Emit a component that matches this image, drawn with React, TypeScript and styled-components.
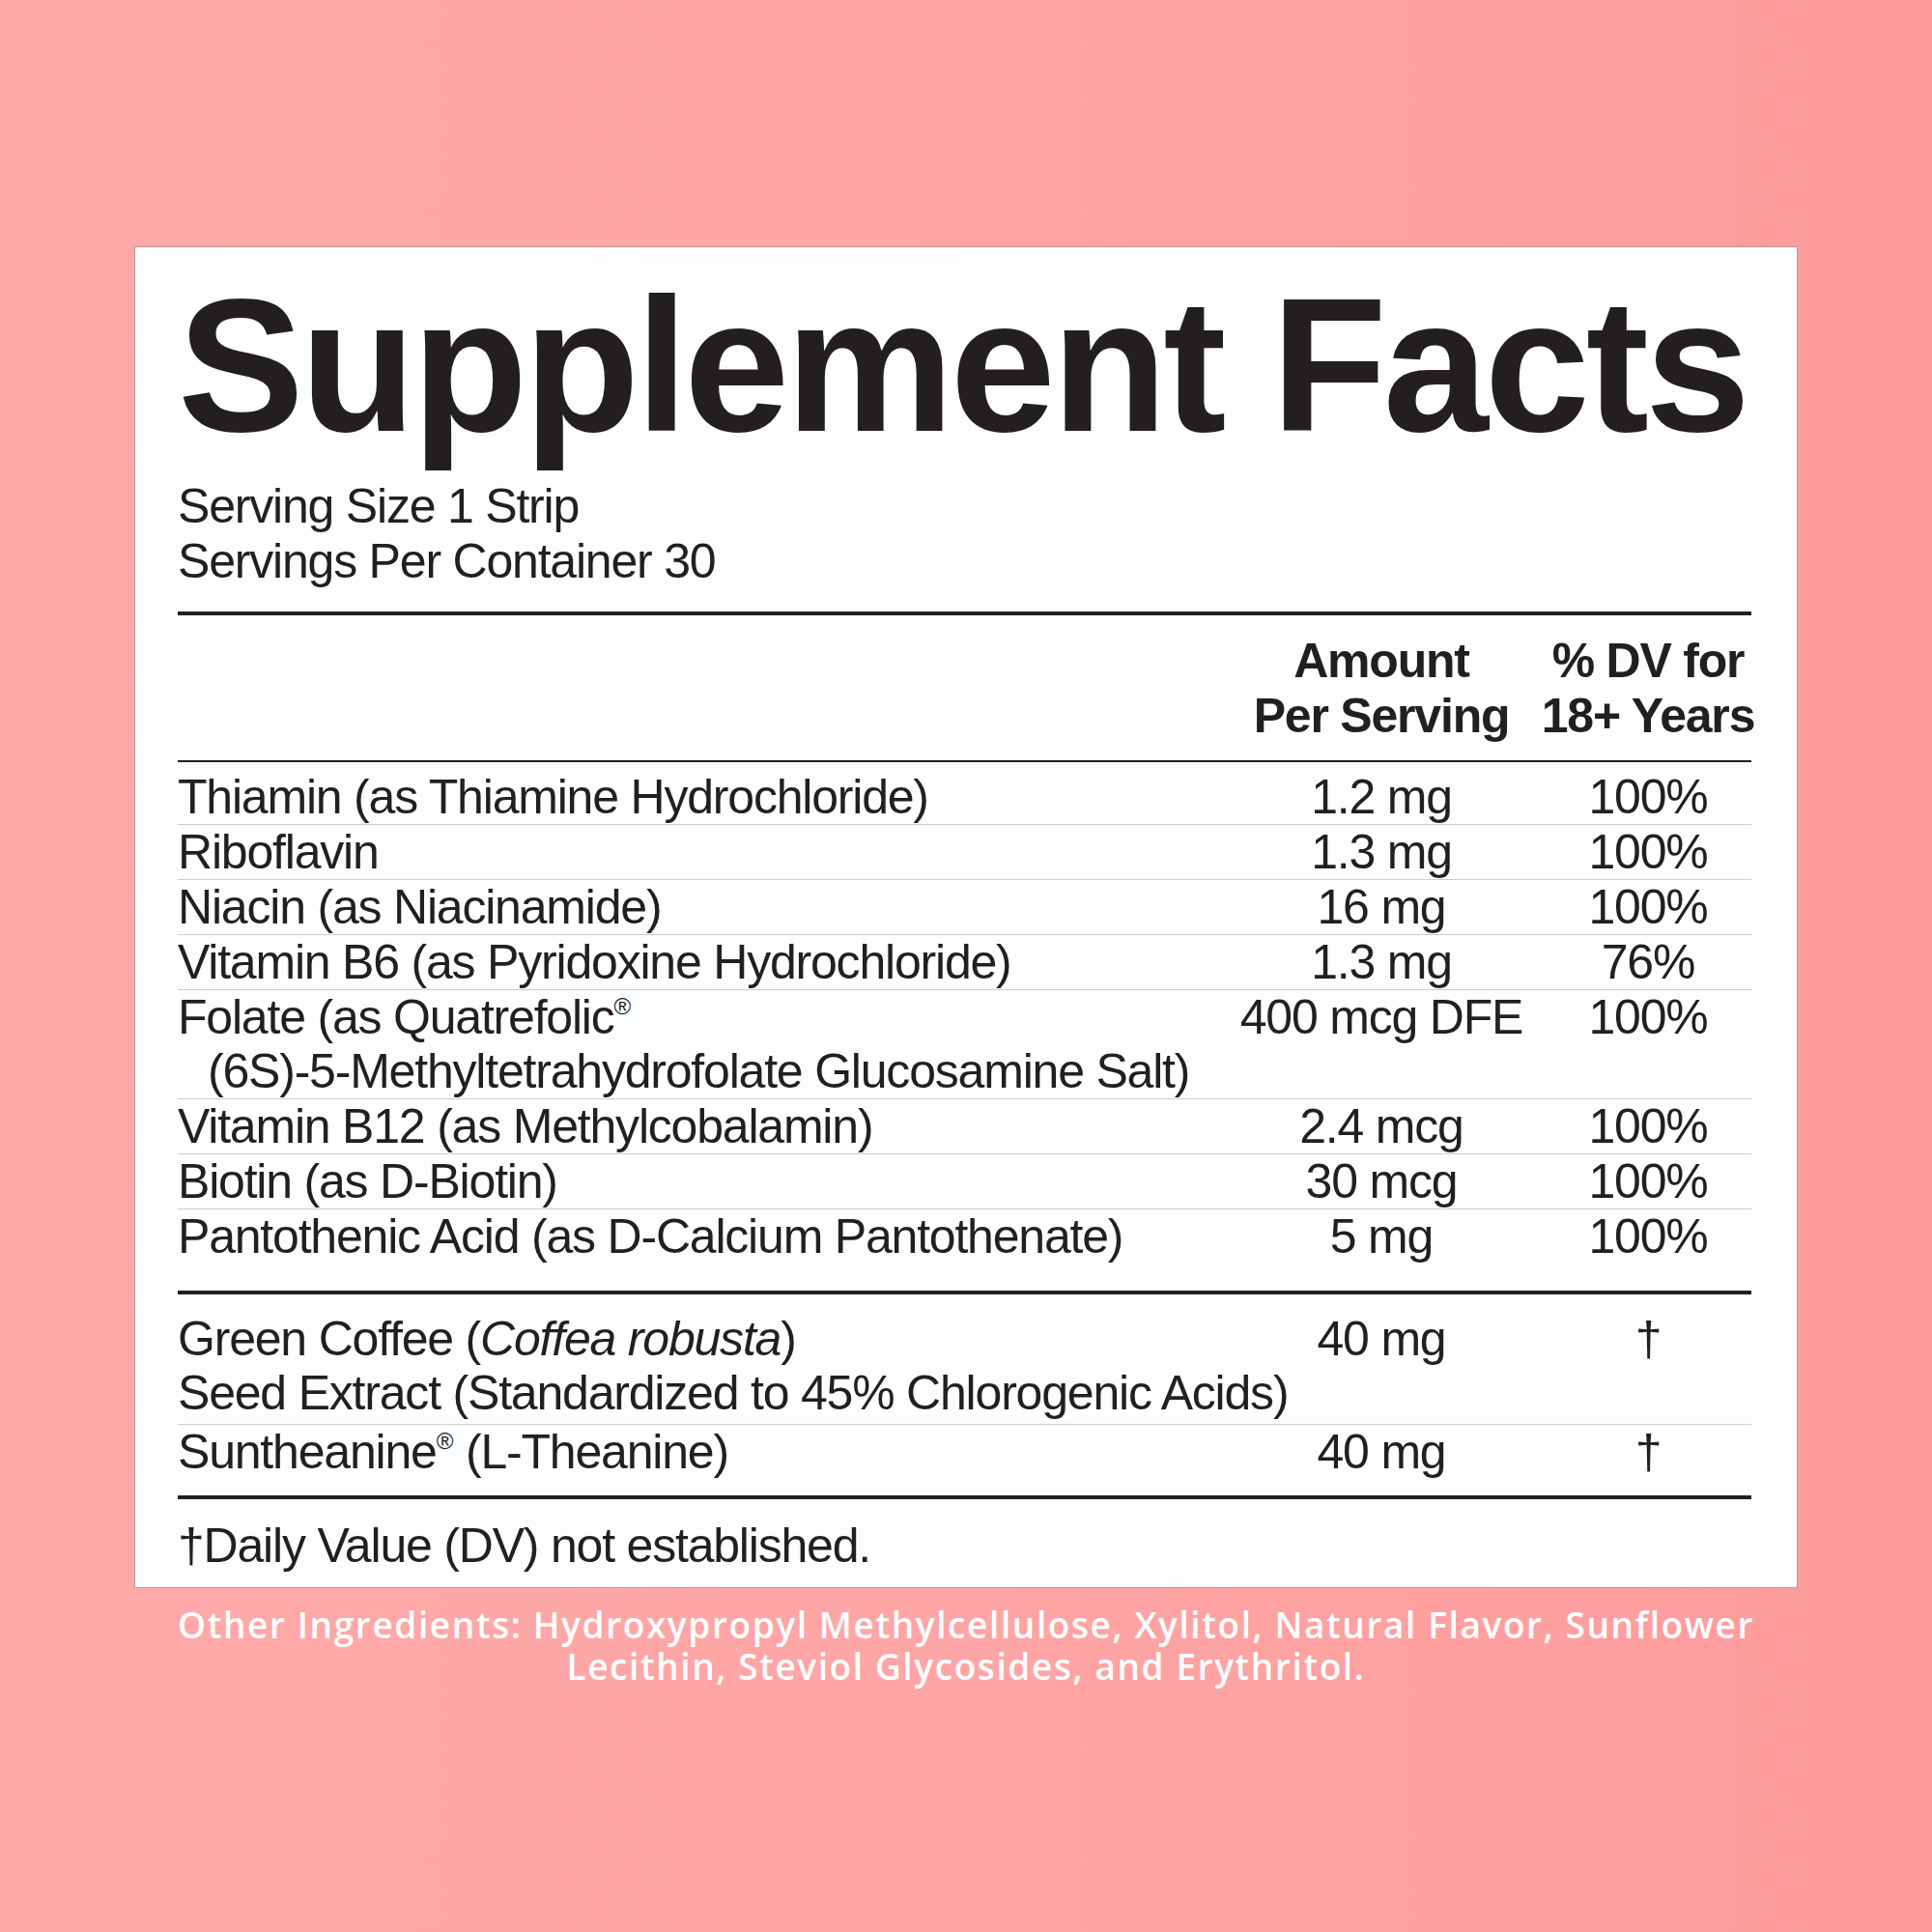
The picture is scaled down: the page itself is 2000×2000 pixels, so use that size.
import styled, { createGlobalStyle } from "styled-components";

const INK = "#231f20";
const COLS = "minmax(0, 1fr) 338px 214px";

const GlobalStyle = createGlobalStyle`
  html, body {
    margin: 0;
    padding: 0;
  }
  body {
    background: linear-gradient(90deg, #fea9a9 0%, #fea5a5 50%, #fe9b9b 100%);
    font-family: "Liberation Sans", Arial, Helvetica, sans-serif;
    color: ${INK};
  }
`;

const Page = styled.div`
  min-height: 2000px;
  width: 2000px;
  display: flex;
  flex-direction: column;
  align-items: center;
  padding-top: 255px;
  box-sizing: border-box;
`;

const Label = styled.section`
  width: 1722px;
  box-sizing: border-box;
  background: #fcfdff;
  border: 1px solid #b49a9a;
  padding: 25px 47px 15px 44px;
  font-size: 50px;
  letter-spacing: -1.2px;
`;

const Title = styled.h1`
  margin: 0;
  font-size: 196px;
  line-height: 196px;
  font-weight: 700;
  letter-spacing: -4px;
`;

const ServingInfo = styled.div`
  margin-top: 19px;
  line-height: 57px;
`;

const Rule = styled.div<{ $h: number }>`
  height: ${({ $h }) => $h}px;
  background: ${INK};
`;

const HeaderRow = styled.div`
  display: grid;
  grid-template-columns: ${COLS};
  padding: 19px 0 17px;
  line-height: 57px;
  font-weight: 700;
`;

const HeaderCell = styled.div`
  justify-self: center;
  text-align: center;
  white-space: nowrap;
`;

const Block = styled.div<{ $top: number; $bottom: number }>`
  padding: ${({ $top, $bottom }) => `${$top}px 0 ${$bottom}px`};
`;

const Row = styled.div<{ $last?: boolean; $extra?: number }>`
  display: grid;
  grid-template-columns: ${COLS};
  line-height: 56px;
  padding-bottom: ${({ $extra }) => $extra ?? 0}px;
  border-bottom: ${({ $last }) => ($last ? "none" : "1px solid #cdcdcd")};
`;

const Name = styled.div`
  white-space: nowrap;
`;

const SubLine = styled.div<{ $indent?: boolean }>`
  padding-left: ${({ $indent }) => ($indent ? "31px" : "0")};
`;

const Value = styled.div`
  justify-self: center;
  white-space: nowrap;
`;

const Reg = styled.sup`
  font-size: 24px;
  line-height: 0;
  vertical-align: 20px;
  letter-spacing: 0;
`;

const Footnote = styled.div`
  padding-top: 20px;
  line-height: 56px;
`;

const OtherIngredients = styled.p`
  margin: 16px 0 0;
  width: 1722px;
  text-align: center;
  color: #ffffff;
  font-family: "Open Sans", "Liberation Sans", sans-serif;
  font-weight: 600;
  font-size: 37px;
  line-height: 43px;
  letter-spacing: 1.6px;
`;

type Nutrient = {
  name: React.ReactNode;
  sub?: React.ReactNode;
  indent?: boolean;
  extra?: number;
  amount: string;
  dv: string;
};

const vitamins: Nutrient[] = [
  { name: "Thiamin (as Thiamine Hydrochloride)", amount: "1.2 mg", dv: "100%" },
  { name: "Riboflavin", amount: "1.3 mg", dv: "100%" },
  { name: "Niacin (as Niacinamide)", amount: "16 mg", dv: "100%" },
  { name: "Vitamin B6 (as Pyridoxine Hydrochloride)", amount: "1.3 mg", dv: "76%" },
  {
    name: (
      <>
        Folate (as Quatrefolic<Reg>®</Reg>
      </>
    ),
    sub: "(6S)-5-Methyltetrahydrofolate Glucosamine Salt)",
    indent: true,
    amount: "400 mcg DFE",
    dv: "100%",
  },
  { name: "Vitamin B12 (as Methylcobalamin)", amount: "2.4 mcg", dv: "100%" },
  { name: "Biotin (as D-Biotin)", amount: "30 mcg", dv: "100%" },
  { name: "Pantothenic Acid (as D-Calcium Pantothenate)", amount: "5 mg", dv: "100%" },
];

const botanicals: Nutrient[] = [
  {
    name: (
      <>
        Green Coffee (<i>Coffea robusta</i>)
      </>
    ),
    sub: "Seed Extract (Standardized to 45% Chlorogenic Acids)",
    extra: 4,
    amount: "40 mg",
    dv: "†",
  },
  {
    name: (
      <>
        Suntheanine<Reg>®</Reg> (L-Theanine)
      </>
    ),
    amount: "40 mg",
    dv: "†",
  },
];

const NutrientRows = ({ items }: { items: Nutrient[] }) => (
  <>
    {items.map((item, i) => (
      <Row key={i} $last={i === items.length - 1} $extra={item.extra}>
        <Name>
          <SubLine>{item.name}</SubLine>
          {item.sub && <SubLine $indent={item.indent}>{item.sub}</SubLine>}
        </Name>
        <Value>{item.amount}</Value>
        <Value>{item.dv}</Value>
      </Row>
    ))}
  </>
);

const App = () => {
  return (
    <>
      <GlobalStyle />
      <Page>
        <Label>
          <Title>Supplement Facts</Title>
          <ServingInfo>
            Serving Size 1 Strip
            <br />
            Servings Per Container 30
          </ServingInfo>
          <Rule $h={4} style={{ marginTop: 23 }} />
          <HeaderRow>
            <div />
            <HeaderCell>
              Amount
              <br />
              Per Serving
            </HeaderCell>
            <HeaderCell>
              % DV for
              <br />
              18+ Years
            </HeaderCell>
          </HeaderRow>
          <Rule $h={2} />
          <Block $top={8} $bottom={28}>
            <NutrientRows items={vitamins} />
          </Block>
          <Rule $h={4} />
          <Block $top={18} $bottom={17}>
            <NutrientRows items={botanicals} />
          </Block>
          <Rule $h={4} />
          <Footnote>†Daily Value (DV) not established.</Footnote>
        </Label>
        <OtherIngredients>
          Other Ingredients: Hydroxypropyl Methylcellulose, Xylitol, Natural Flavor, Sunflower
          <br />
          Lecithin, Steviol Glycosides, and Erythritol.
        </OtherIngredients>
      </Page>
    </>
  );
};

export default App;
